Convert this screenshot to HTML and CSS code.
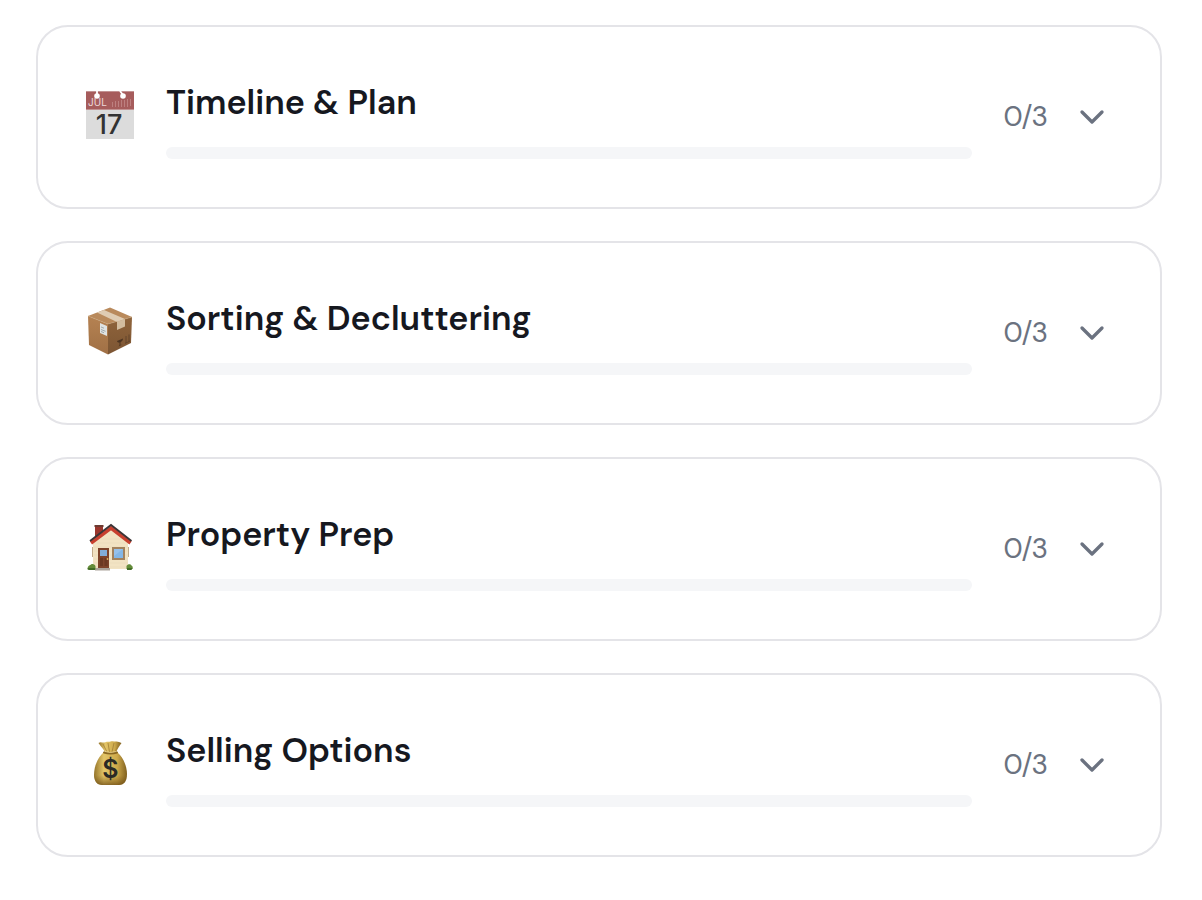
FILE: index.html
```html
<!DOCTYPE html>
<html lang="en">
<head>
    <meta charset="utf-8">
    <title>Checklist</title>
    <link rel="stylesheet" href="styles.css">
</head>
<body>
    <main class="checklist">
        <button type="button" class="card" aria-expanded="false">
            <svg class="icon" viewBox="0 0 48 48" aria-hidden="true">
                <path fill="#dcdcdc" d="M0 0h48v48H0z"/>
                <path fill="#a65c5c" d="M0 0h48v19H0z"/>
                <path stroke="#c9a0a0" d="M0 18.500h48M0 .5h48" stroke-width=".8"/>
                <path stroke="#bd8080" stroke-width="1" d="M26.500 16v-5M29.500 16v-6M32.500 16v-6M35.500 16v-7M38.500 16v-7M41.500 16V8M44.500 15V8"/>
                <circle cx="11" cy="5" r="2.800" fill="#fff"/>
                <circle cx="37" cy="5" r="2.800" fill="#fff"/>
                <path stroke="#fff" stroke-width="1.800" d="M11 0v5M34 0l3 4"/>
                <text class="month" x="2" y="15">JUL</text>
                <text class="day" x="23" y="43" text-anchor="middle">17</text>
            </svg>
            <span class="info">
                <span class="title" id="timeline">Timeline &amp; Plan</span>
                <progress class="bar" value="0" max="3" aria-labelledby="timeline"></progress>
            </span>
            <span class="count">0/3</span>
            <svg class="chevron" viewBox="0 0 24 24" aria-hidden="true"><path d="m6 9 6 6 6-6"/></svg>
        </button>

        <button type="button" class="card" aria-expanded="false">
            <svg class="icon" viewBox="0 0 48 48" aria-hidden="true">
                <defs>
                    <linearGradient id="boxLeft" x1="0" y1="0" x2="0" y2="1">
                        <stop offset="0" stop-color="#b58252"/>
                        <stop offset="1" stop-color="#a07045"/>
                    </linearGradient>
                    <linearGradient id="boxRight" x1="0" y1="0" x2="0" y2="1">
                        <stop offset="0" stop-color="#8f643b"/>
                        <stop offset="1" stop-color="#7c5533"/>
                    </linearGradient>
                </defs>
                <path fill="#b98a5c" d="M24 .5 46 10 22 17 2 9z"/>
                <path fill="url(#boxLeft)" d="M2 9l20 8v30.500L3 38z"/>
                <path fill="url(#boxRight)" d="M22 17l24-7-1 26-23 11.500z"/>
                <path fill="#dfccb3" d="M11 5.500 18 3l21 9-8 3z"/>
                <path fill="#d3bd9f" d="M31 14.500 39 12v7.500L31 23z"/>
                <path stroke="#c9a67c" stroke-width=".5" d="M2 9l20 8 9-2.600M39 12l7-2" fill="none"/>
                <path fill="#dfe3e3" d="M14 16l7 3v10L14 26z"/>
                <path stroke="#8f9a9f" stroke-width=".8" d="M15 20l3 1.200M15 22.500l4.500 1.800M15 24.500l3 1.200"/>
                <path fill="#4c3421" d="M31 34l6-2.500c0 2-1 3-2.500 3.700V38l2-.5-4 2 1-1.500v-2.500C32 35.800 31 35 31 34z"/>
                <path stroke="#5c4029" stroke-width=".8" d="M40 29v7M43 27.500v7M39 36.500l5-2.500" fill="none"/>
            </svg>
            <span class="info">
                <span class="title" id="sorting">Sorting &amp; Decluttering</span>
                <progress class="bar" value="0" max="3" aria-labelledby="sorting"></progress>
            </span>
            <span class="count">0/3</span>
            <svg class="chevron" viewBox="0 0 24 24" aria-hidden="true"><path d="m6 9 6 6 6-6"/></svg>
        </button>

        <button type="button" class="card" aria-expanded="false">
            <svg class="icon" viewBox="0 0 48 48" aria-hidden="true">
                <path fill="#9a352c" d="M9 3h8v14H9z"/>
                <path fill="#6d3a31" d="M8.500 2h9v2h-9z"/>
                <path fill="#c3ac8a" d="M6 24h2v10H6zM41 24h2v10h-2z"/>
                <path fill="#f2e3c3" d="M7 19 25 6l17 13v27H7z"/>
                <path stroke="#e6d6b4" stroke-width=".5" d="M15 16h20M11 20h28M8 24h34M8 28h34M8 32h34M8 36h34M8 40h34M8 44h34"/>
                <path fill="none" stroke="#c8402f" stroke-width="3.500" d="M5 20 25 5 44.500 20"/>
                <path fill="none" stroke="#3b3436" stroke-width="1.800" d="M4 18 25 2 45.500 18"/>
                <path fill="#7d432a" d="M12 25h11v21H12z"/>
                <path fill="#6b3822" d="M14 35h3v8h-3zM18.500 35h3v8h-3z"/>
                <path fill="#81add8" d="M14 27h7v6h-7z"/>
                <circle cx="21.500" cy="36" r=".9" fill="#dfb15b"/>
                <path fill="#a2825e" d="M26 24h13v13H26z"/>
                <path fill="#83b6e6" d="M28 26h9v9h-9z"/>
                <path fill="#95c1ec" d="m28 26 9 0-9 7z"/>
                <path fill="#aaa39b" d="M9 45h15v2.500H9z"/>
                <path fill="#648c39" d="M1.500 46c0-3 2-4 3-4 1-2 5-1 5 1.500v3h-8zM40.500 46v-3c1-2 4-2.500 5-.5 2 1 1 3.500 1 3.500z"/>
                <path fill="#426d27" d="M1.500 45h7.500v2H2.500zM41 45h5.500l-1 2H41z"/>
            </svg>
            <span class="info">
                <span class="title" id="property">Property Prep</span>
                <progress class="bar" value="0" max="3" aria-labelledby="property"></progress>
            </span>
            <span class="count">0/3</span>
            <svg class="chevron" viewBox="0 0 24 24" aria-hidden="true"><path d="m6 9 6 6 6-6"/></svg>
        </button>

        <button type="button" class="card" aria-expanded="false">
            <svg class="icon" viewBox="0 0 48 48" aria-hidden="true">
                <defs>
                    <linearGradient id="bag" x1="0" y1="0" x2="1" y2="0">
                        <stop offset="0" stop-color="#95752b"/>
                        <stop offset=".3" stop-color="#e3c568"/>
                        <stop offset=".7" stop-color="#cda94a"/>
                        <stop offset="1" stop-color="#80601f"/>
                    </linearGradient>
                    <linearGradient id="shade" x1="0" y1="0" x2="0" y2="1">
                        <stop offset=".7" stop-color="#795514" stop-opacity="0"/>
                        <stop offset="1" stop-color="#654410" stop-opacity=".7"/>
                    </linearGradient>
                </defs>
                <path fill="url(#bag)" d="M12.500 4c2-1.500 4 0 6-.5 2-1.500 4-.5 6-1 3-1 4 .5 6 0 2 0 3 1 5 1.500-2 3-4.500 6-5.500 10H19c-1-4-4-6-6.500-10z"/>
                <path stroke="#a07f36" stroke-width=".8" d="M17 5l4 8M22 4l1.500 9M28 4l-2 9M33 5l-4 8" fill="none"/>
                <path fill="url(#bag)" d="M18 13h13c6 5 10 14 10 22 0 7-3 11-8 11H16c-5 0-8-4-8-10 0-9 4-18 10-23z"/>
                <path fill="url(#shade)" d="M18 13h13c6 5 10 14 10 22 0 7-3 11-8 11H16c-5 0-8-4-8-10 0-9 4-18 10-23z"/>
                <path stroke="#8a6822" stroke-width="2" stroke-linecap="round" fill="none" d="M18 13.500q6.500 2 13 0"/>
                <path stroke="#f1dda0" stroke-width=".7" d="M19 12.500q6 2 11 0" fill="none"/>
                <text class="dollar" x="24.500" y="39" text-anchor="middle">$</text>
            </svg>
            <span class="info">
                <span class="title" id="selling">Selling Options</span>
                <progress class="bar" value="0" max="3" aria-labelledby="selling"></progress>
            </span>
            <span class="count">0/3</span>
            <svg class="chevron" viewBox="0 0 24 24" aria-hidden="true"><path d="m6 9 6 6 6-6"/></svg>
        </button>
    </main>
</body>
</html>
```
FILE: styles.css
```css
body {
    margin: 0;
    background-color: #fff;
    font-family: "DM Sans", Inter, sans-serif;
}

.checklist {
    display: flex;
    flex-direction: column;
    gap: 32px;
    padding: 25px 40px 25px 36px;
}

.card {
    display: flex;
    align-items: center;
    width: 100%;
    padding: 48px;
    border: 2px solid #e4e4e8;
    border-radius: 32px;
    background-color: #fff;
    color: #16181f;
    font-family: inherit;
    text-align: left;
    cursor: pointer;
}

.icon {
    flex: none;
    width: 48px;
    height: 48px;
    padding-bottom: 4px;
}

.info {
    flex: 1;
    display: flex;
    flex-direction: column;
    gap: 16px;
    margin: 0 32px;
}

.title {
    font-size: 34px;
    font-weight: 600;
    line-height: 56px;
}

.bar {
    appearance: none;
    display: block;
    width: 100%;
    height: 12px;
    border: none;
    border-radius: 6px;
    overflow: hidden;
    background-color: #f5f6f8;
}

.bar::-webkit-progress-bar {
    background-color: #f5f6f8;
}

.bar::-webkit-progress-value {
    background-color: #16181f;
}

.count {
    color: #6b7280;
    font-size: 28px;
    line-height: 40px;
}

.chevron {
    flex: none;
    width: 40px;
    height: 40px;
    margin-left: 24px;
    fill: none;
    stroke: #6b7280;
    stroke-width: 2;
    stroke-linecap: round;
    stroke-linejoin: round;
}

.month {
    fill: #ecd9d9;
    font-family: Inter, sans-serif;
    font-size: 10px;
}

.day {
    fill: #333;
    font-family: Inter, sans-serif;
    font-size: 27px;
    font-weight: 500;
}

.dollar {
    fill: #2b2a25;
    font-family: Inter, sans-serif;
    font-size: 25px;
    font-weight: 600;
}
```
